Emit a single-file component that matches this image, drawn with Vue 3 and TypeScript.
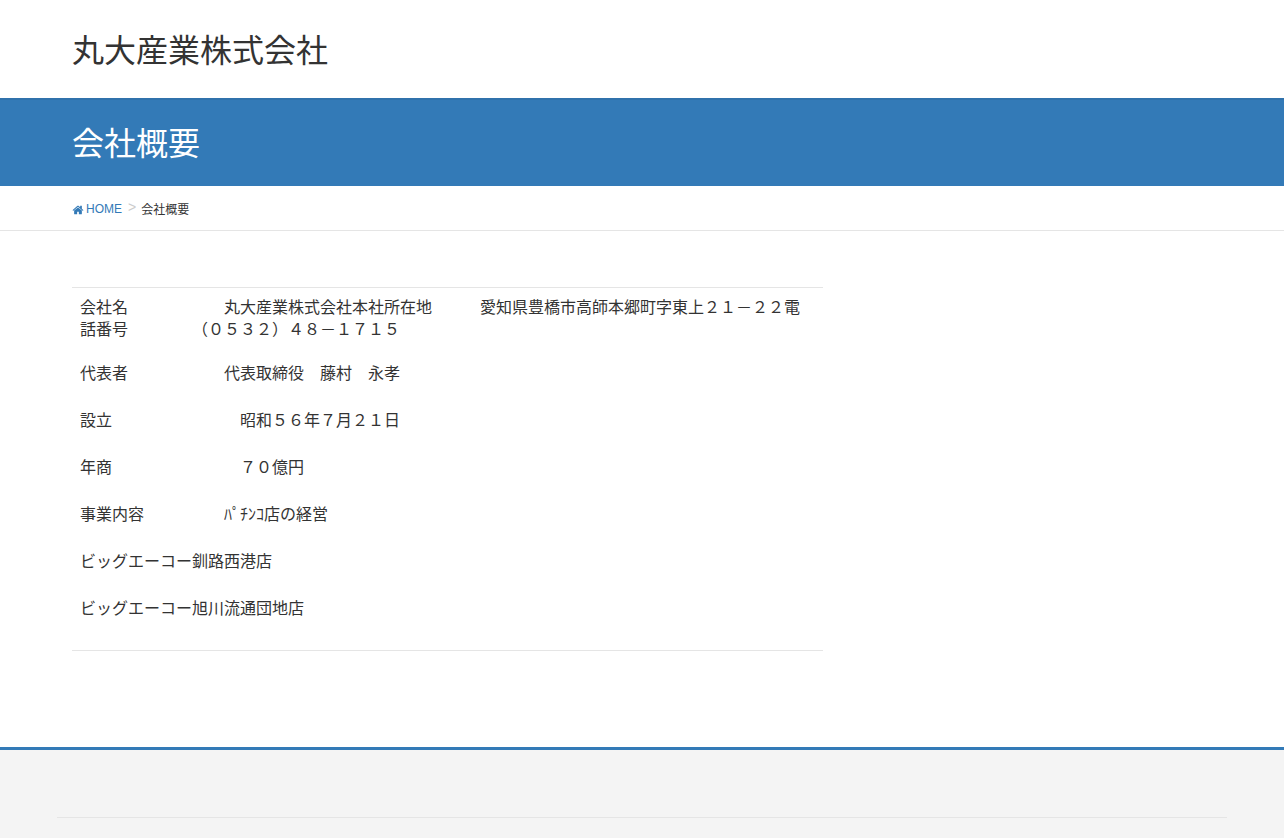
<script setup lang="ts">
const crumbs: string = '会社概要'
const rows: string[] = [
  '代表者　　　　　　代表取締役　藤村　永孝',
  '設立　　　　　　　　昭和５６年７月２１日',
  '年商　　　　　　　　７０億円',
  '事業内容　　　　　ﾊﾟﾁﾝｺ店の経営',
  'ビッグエーコー釧路西港店',
  'ビッグエーコー旭川流通団地店',
]
</script>

<template>
  <div class="page">
    <header class="site-header">
      <div class="container">
        <h1 class="logo">丸大産業株式会社</h1>
      </div>
    </header>
    <div class="band">
      <div class="container">
        <h2 class="band-title">{{ crumbs }}</h2>
      </div>
    </div>
    <nav class="breadcrumb">
      <div class="container crumb-row">
        <a class="home">
          <svg class="home-icon" viewBox="0 0 1664 1792" aria-hidden="true">
            <path fill="currentColor" d="M1408 992v480q0 26-19 45t-45 19h-384v-384h-256v384h-384q-26 0-45-19t-19-45v-480q0-1 .5-3t.5-3l575-474 575 474q1 2 1 6zm223-69l-62 74q-8 9-21 11h-3q-13 0-21-7l-692-577-692 577q-12 8-24 7-13-2-21-11l-62-74q-8-10-7-23.500t11-21.500l719-599q32-26 76-26t76 26l244 204v-195q0-14 9-23t23-9h192q14 0 23 9t9 23v408l219 182q10 8 11 21.500t-7 23.500z"/>
          </svg>HOME</a>
        <span class="sep">&gt;</span>
        <span class="current">{{ crumbs }}</span>
      </div>
    </nav>
    <main class="container main">
      <div class="content">
        <div class="table-cell">
          <p class="first">会社名　　　　　　丸大産業株式会社本社所在地　　　愛知県豊橋市高師本郷町字東上２１－２２電話番号　　　　（０５３２）４８－１７１５</p>
          <p v-for="row in rows" :key="row">{{ row }}</p>
        </div>
      </div>
    </main>
    <footer class="site-footer">
      <div class="footer-inner"></div>
    </footer>
  </div>
</template>

<style>
html, body { margin: 0; background: #fff; }
</style>

<style scoped>
.page {
  font-family: "Liberation Sans", "Noto Sans CJK JP", sans-serif;
  font-size: 14px;
  color: #333;
  line-height: 1.42857;
  height: 838px;
  overflow: hidden;
  text-spacing-trim: space-all;
}
.container { width: 1140px; margin: 0 auto; }
.site-header { height: 98px; display: flex; align-items: center; }
.logo { margin: 0; padding-top: 5px; font-size: 32px; font-weight: 400; line-height: 1.1; }
.band {
  height: 88px;
  background: #337ab7;
  display: flex;
  align-items: center;
  box-shadow: inset 0 2px 0 rgba(0, 0, 0, 0.06);
}
.band-title { margin: 0; padding-top: 5px; font-size: 32px; font-weight: 400; line-height: 1.1; color: #fff; }
.breadcrumb { height: 44px; border-bottom: 1px solid #e5e5e5; }
.crumb-row { display: flex; align-items: center; height: 44px; padding-top: 4px; box-sizing: border-box; font-size: 12px; }
.home { color: #337ab7; display: flex; align-items: center; }
.home-icon { width: 12px; height: 12px; margin-right: 2px; }
.sep { color: #ccc; margin: 0 5px 0 6px; font-size: 14px; position: relative; top: -2px; }
.current { position: relative; top: 1px; }
.main { height: 516px; padding-top: 56px; box-sizing: border-box; }
.content { width: 751px; border-top: 1px solid #e5e5e5; border-bottom: 1px solid #e5e5e5; box-sizing: border-box; height: 364px; padding: 9px 8px 0; font-size: 16px; }
p { margin: 0 0 24px; line-height: 23px; }
p.first { margin-bottom: 21px; line-height: 22px; }
.site-footer { background: #f4f4f4; border-top: 3px solid #337ab7; height: 100px; }
.footer-inner { width: 1170px; margin: 0 auto; padding-top: 67px; border-bottom: 1px solid #e5e5e5; }
</style>
